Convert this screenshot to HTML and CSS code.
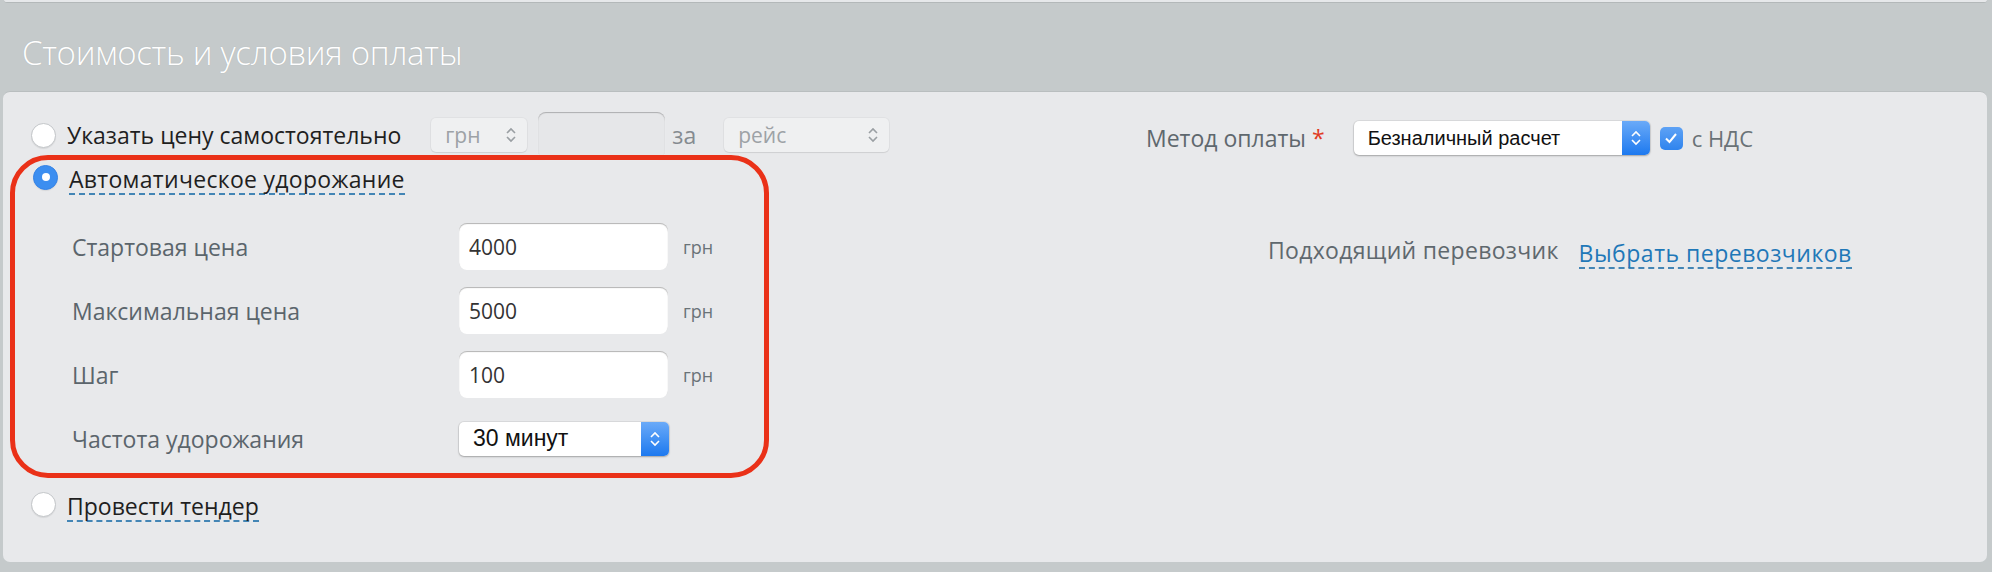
FILE: index.html
```html
<!DOCTYPE html>
<html lang="ru">
<head>
  <meta charset="UTF-8" />
  <meta name="viewport" content="width=device-width, initial-scale=1.0"/>
  <title>Стоимость и условия оплаты</title>
  <link rel="stylesheet" href="styles.css">
</head>
<body>
  <div class="prev-card"></div>
  <h2 class="section-title">Стоимость и условия оплаты</h2>

  <div class="panel">
    <div class="col-left">
      <div class="opt opt-first">
        <span class="radio"></span>
        <span class="opt-text">Указать цену самостоятельно</span>
        <div class="select select-off select-cur">
          <span>грн</span>
          <svg class="chev" width="12" height="18" viewBox="0 0 12 18"><path d="M2 7 L6 3 L10 7 M2 11 L6 15 L10 11" fill="none" stroke="#9a9fa3" stroke-width="1.6"/></svg>
        </div>
        <input class="blank" type="text" disabled>
        <span class="za">за</span>
        <div class="select select-off select-per">
          <span>рейс</span>
          <svg class="chev" width="12" height="18" viewBox="0 0 12 18"><path d="M2 7 L6 3 L10 7 M2 11 L6 15 L10 11" fill="none" stroke="#9a9fa3" stroke-width="1.6"/></svg>
        </div>
      </div>

      <div class="highlight">
        <div class="opt">
          <span class="radio radio-on"></span>
          <span class="opt-text dashed">Автоматическое удорожание</span>
        </div>

        <div class="field">
          <span class="field-label">Стартовая цена</span>
          <input class="num" type="text" value="4000">
          <span class="unit">грн</span>
        </div>
        <div class="field">
          <span class="field-label">Максимальная цена</span>
          <input class="num" type="text" value="5000">
          <span class="unit">грн</span>
        </div>
        <div class="field">
          <span class="field-label">Шаг</span>
          <input class="num" type="text" value="100">
          <span class="unit">грн</span>
        </div>
        <div class="field">
          <span class="field-label">Частота удорожания</span>
          <div class="select select-freq">
            <span>30 минут</span>
            <span class="stepper">
              <svg width="12" height="18" viewBox="0 0 12 18"><path d="M2 7 L6 3 L10 7 M2 11 L6 15 L10 11" fill="none" stroke="#fff" stroke-width="1.6"/></svg>
            </span>
          </div>
        </div>
      </div>

      <div class="opt opt-last">
        <span class="radio"></span>
        <span class="opt-text dashed">Провести тендер</span>
      </div>
    </div>

    <div class="col-right">
      <div class="pay-row">
        <span class="pay-label">Метод оплаты <span class="req">*</span></span>
        <div class="select select-pay">
          <span>Безналичный расчет</span>
          <span class="stepper">
            <svg width="12" height="18" viewBox="0 0 12 18"><path d="M2 7 L6 3 L10 7 M2 11 L6 15 L10 11" fill="none" stroke="#fff" stroke-width="1.6"/></svg>
          </span>
        </div>
        <span class="check">
          <svg width="14" height="12" viewBox="0 0 14 12"><path d="M2 6.5 L5.5 10 L12 2" fill="none" stroke="#fff" stroke-width="2"/></svg>
        </span>
        <span class="vat">с НДС</span>
      </div>
      <div class="carrier-row">
        <span class="pay-label">Подходящий перевозчик</span>
        <a href="#" class="carrier-link">Выбрать перевозчиков</a>
      </div>
    </div>
  </div>
</body>
</html>
```

FILE: styles.css
```css
body {
  margin: 0;
  background: #c5cacb;
  font-family: 'Open Sans', sans-serif;
  color: #222;
  height: 572px;
  overflow: hidden;
}

.prev-card {
  height: 2px;
  margin: 0 5px 0 4px;
  background: #e6e8ea;
  border-bottom: 1px solid #b3b8b9;
  border-radius: 0 0 4px 4px;
}

.section-title {
  margin: 0;
  padding: 30px 0 18px 22px;
  line-height: 40px;
  font-size: 33px;
  font-weight: 300;
  color: #fff;
  letter-spacing: -0.3px;
  text-shadow: 0 0 1px rgba(0, 0, 0, 0.15);
}

.panel {
  box-sizing: border-box;
  height: 471px;
  margin: 0 5px 0 3px;
  background: #e8e9eb;
  border-top: 1px solid #b9bebf;
  border-radius: 7px;
  display: flex;
}

.col-left {
  width: 1133px;
  padding: 25px 0 0 7px;
  box-sizing: border-box;
}

.opt {
  height: 36px;
  display: flex;
  align-items: center;
  padding-left: 21px;
}

.radio {
  box-sizing: border-box;
  width: 25px;
  height: 25px;
  border-radius: 50%;
  background: #fff;
  border: 1px solid #c3c6c9;
  box-shadow: 0 1px 1px rgba(0, 0, 0, 0.08);
  margin-right: 11px;
  flex-shrink: 0;
}

.radio-on {
  background: #3c8ef0;
  border-color: #3583e6;
  display: flex;
  align-items: center;
  justify-content: center;
}

.radio-on::after {
  content: "";
  width: 8px;
  height: 8px;
  border-radius: 50%;
  background: #fff;
}

.opt-text {
  font-size: 23px;
  color: #1f1f1f;
}

.dashed {
  border-bottom: 2px dashed #4385b5;
  line-height: 28px;
  margin-top: 6px;
}

.highlight .dashed {
  letter-spacing: 0.3px;
}

.select {
  box-sizing: border-box;
  display: flex;
  align-items: center;
  justify-content: space-between;
  height: 34px;
  background: #fff;
  border-radius: 5px;
  box-shadow: 0 0 0 1px rgba(0, 0, 0, 0.06), 0 1px 2px rgba(0, 0, 0, 0.25);
  font-family: 'Liberation Sans', Arial, sans-serif;
  font-size: 20px;
  color: #111;
  padding-left: 14px;
  overflow: hidden;
}

.select-off {
  background: #eff0f1;
  color: #9da2a6;
  box-shadow: 0 0 0 1px rgba(0, 0, 0, 0.03), 0 1px 1px rgba(0, 0, 0, 0.08);
  padding-right: 10px;
  font-family: 'Open Sans', sans-serif;
  font-size: 21px;
}

.select-cur {
  width: 96px;
  margin-left: 30px;
}

.select-per {
  width: 165px;
}

.blank {
  box-sizing: border-box;
  width: 127px;
  height: 47px;
  margin-left: 11px;
  background: #e6e7e9;
  border: none;
  border-radius: 8px;
  box-shadow: inset 0 1px 1px rgba(0, 0, 0, 0.25), 0 1px 1px rgba(255, 255, 255, 0.6);
}

.za {
  font-size: 23px;
  color: #858b90;
  margin: 0 28px 0 7px;
}

.highlight {
  position: relative;
  width: 759px;
  box-sizing: border-box;
  margin-top: 2px;
  padding: 2px 0 11px 0;
  border: 5px solid #ea3118;
  border-radius: 38px;
}

.highlight .opt {
  height: 30px;
  padding-left: 18px;
  margin-bottom: 31px;
}

.field {
  display: flex;
  align-items: center;
  height: 47px;
  padding-left: 57px;
  margin-bottom: 17px;
}

.field:last-child {
  margin-bottom: 0;
}

.field-label {
  width: 387px;
  font-size: 23px;
  color: #5b656c;
}

.num {
  box-sizing: border-box;
  width: 209px;
  height: 47px;
  border: none;
  border-radius: 8px;
  background: #fff;
  box-shadow: inset 0 1px 1px rgba(0, 0, 0, 0.3);
  padding: 0 10px;
  font-family: 'Open Sans', sans-serif;
  font-size: 21px;
  color: #333;
}

.unit {
  margin-left: 15px;
  font-size: 18px;
  color: #6a7378;
}

.select-freq {
  width: 210px;
  font-size: 23px;
}

.stepper {
  width: 28px;
  height: 100%;
  display: flex;
  align-items: center;
  justify-content: center;
  background: linear-gradient(#6aaaf8, #1d79ef);
}

.col-right {
  flex: 1;
  padding-top: 28px;
  padding-left: 10px;
}

.pay-row {
  display: flex;
  align-items: center;
  height: 36px;
}

.pay-label {
  font-size: 23px;
  color: #5f686e;
}

.req {
  color: #e03a22;
}

.select-pay {
  width: 296px;
  margin-left: 29px;
}

.check {
  box-sizing: border-box;
  width: 23px;
  height: 23px;
  margin-left: 10px;
  border-radius: 5px;
  background: linear-gradient(#5ea2f5, #2f84ee);
  display: flex;
  align-items: center;
  justify-content: center;
}

.vat {
  margin-left: 9px;
  font-size: 22px;
  color: #6a7277;
}

.carrier-row {
  display: flex;
  align-items: center;
  height: 36px;
  margin-top: 76px;
  padding-left: 122px;
}

.carrier-row .pay-label {
  letter-spacing: 0.3px;
}

.carrier-link {
  margin-left: 20px;
  font-size: 23px;
  letter-spacing: 0.5px;
  color: #1f78b8;
  text-decoration: none;
  border-bottom: 2px dashed #4385b5;
  line-height: 28px;
  margin-top: 8px;
}

.opt-last {
  margin-top: 8px;
}
```
